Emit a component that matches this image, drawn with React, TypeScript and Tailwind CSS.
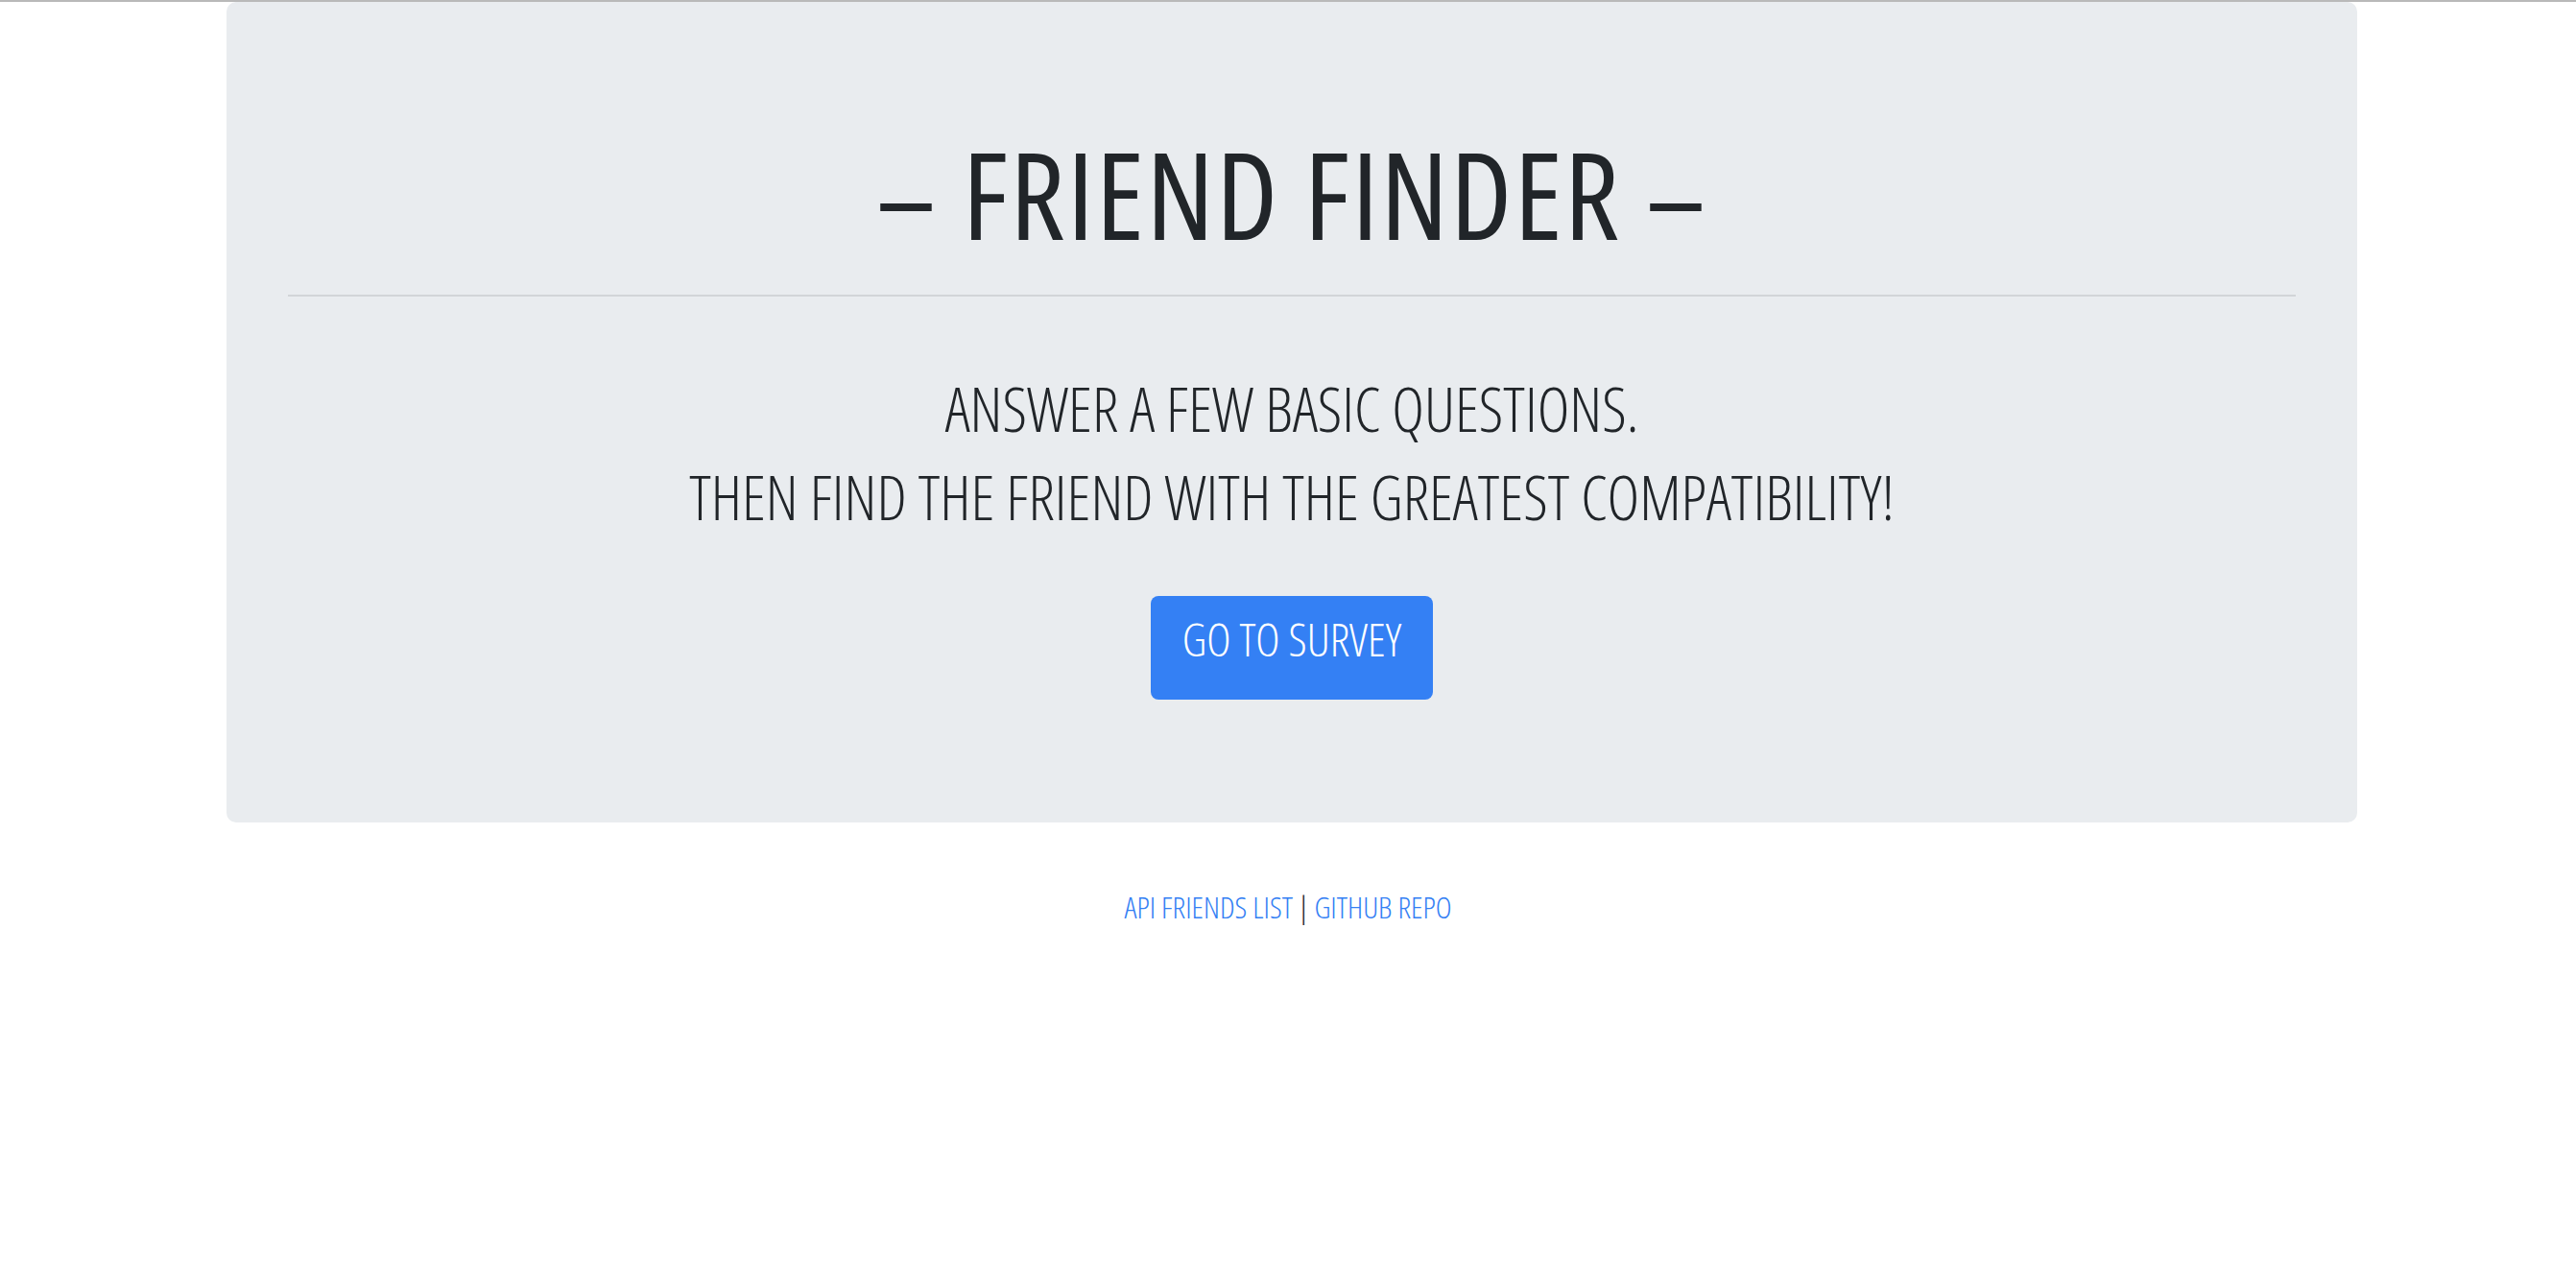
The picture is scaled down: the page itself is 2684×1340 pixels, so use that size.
const condensed = { fontFamily: '"Open Sans", "Noto Sans", sans-serif', fontStretch: "75%" } as const;

export default function App() {
  return (
    <div className="min-h-screen bg-white border-t-2 border-[#b9b9b9] text-[#212529]" style={condensed}>
      <div className="ml-[236px] w-[2220px] rounded-[10px] bg-[#e9ecef] px-[64px] pt-[124px] pb-[128px]">
        <h1 className="text-center text-[126px] leading-[151px] font-normal tracking-[2px]">– FRIEND FINDER –</h1>
        <hr className="mt-[30px] h-[2px] border-0 bg-[#d2d5d8]" />
        <p className="mt-[71px] text-center text-[64px] leading-[92px] font-light">
          ANSWER A FEW BASIC QUESTIONS.
          <br />
          THEN FIND THE FRIEND WITH THE GREATEST COMPATIBILITY!
        </p>
        <div className="mt-[57px] flex justify-center">
          <a
            href="#survey"
            className="h-[108px] w-[294px] rounded-[8px] bg-[#3480f4] pt-[15px] text-center text-[48px] leading-[60px] font-light text-white"
          >
            GO TO SURVEY
          </a>
        </div>
      </div>

      <footer className="mt-[64px] flex justify-center gap-[5px] text-[32px] leading-[48px] font-light">
        <a href="#api" className="text-[#3480f4]">API FRIENDS LIST</a>
        <span>|</span>
        <a href="#github" className="text-[#3480f4]">GITHUB REPO</a>
      </footer>
    </div>
  );
}
